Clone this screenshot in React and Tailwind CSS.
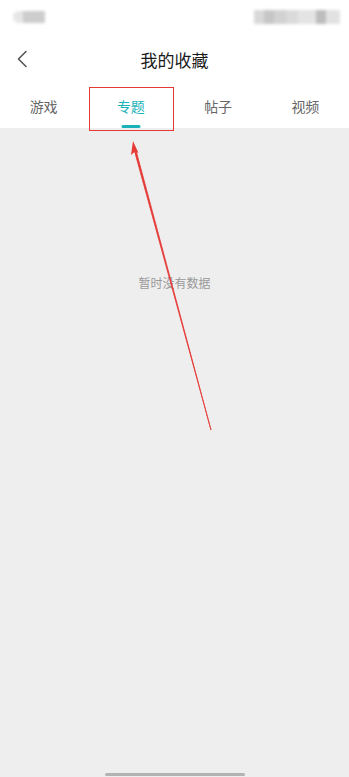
import { useState } from 'react'

const tabs = ['游戏', '专题', '帖子', '视频']

function App() {
  const [active, setActive] = useState(1)

  return (
    <div
      className="relative w-[349px] h-[777px] flex flex-col bg-white overflow-hidden"
      style={{ fontFamily: '"Noto Sans CJK SC", "Noto Sans", sans-serif' }}
    >
      {/* 状态栏（已打码） */}
      <div className="h-[36px] flex items-start justify-between pl-[13px] pr-[9px] pt-[10px]">
        <div className="flex mt-[1px] blur-[1.5px]">
          <div className="w-[10px] h-[12px] bg-[#e6e6e6] rounded-l-md" />
          <div className="w-[22px] h-[12px] bg-[#cdcdcd]" />
        </div>
        <div className="flex blur-[1.5px]">
          <div className="w-[10px] h-[14px] bg-[#d9d9d9]" />
          <div className="w-[10px] h-[14px] bg-[#c6c6c6]" />
          <div className="w-[12px] h-[14px] bg-[#d2d2d2]" />
          <div className="w-[12px] h-[14px] bg-[#dadada]" />
          <div className="w-[18px] h-[14px] bg-[#e4e4e4]" />
          <div className="w-[10px] h-[14px] bg-[#bdbdbd]" />
          <div className="w-[14px] h-[14px] bg-[#e2e2e2]" />
        </div>
      </div>

      {/* 标题栏 */}
      <div className="relative h-[48px] flex items-center justify-center">
        <button className="absolute left-[12px] top-[13px] w-[20px] h-[20px] flex items-center justify-center">
          <svg width="12" height="18" viewBox="0 0 12 18" fill="none">
            <path d="M10 1.5L2.5 9L10 16.5" stroke="#555" strokeWidth="1.6" strokeLinecap="round" strokeLinejoin="round" />
          </svg>
        </button>
        <h1 className="text-[17px] text-[#1a1a1a] leading-none -mt-[2px]">我的收藏</h1>
      </div>

      {/* 分类标签 */}
      <div className="h-[44px] grid grid-cols-4">
        {tabs.map((t, i) => (
          <button
            key={t}
            onClick={() => setActive(i)}
            className="relative flex items-center justify-center"
          >
            <span className={`text-[14px] leading-none ${active === i ? 'text-[#1bb3b8]' : 'text-[#666]'}`}>{t}</span>
            {active === i && (
              <span className="absolute bottom-0 left-1/2 -translate-x-1/2 w-[19px] h-[3px] rounded-full bg-[#1bb3b8]" />
            )}
          </button>
        ))}
      </div>

      {/* 内容区 */}
      <div className="flex-1 bg-[#eeeeee] flex flex-col items-center">
        <p className="mt-[149px] text-[12px] text-[#999] leading-none">暂时没有数据</p>
        <div className="mt-auto mb-[1px] w-[140px] h-[3px] rounded-full bg-[#b3b3b3]" />
      </div>

      {/* 标注：红框和箭头 */}
      <div className="absolute left-[89px] top-[87px] w-[85px] h-[44px] border border-[#e53935] pointer-events-none" />
      <svg className="absolute inset-0 pointer-events-none" width="349" height="777" viewBox="0 0 349 777">
        <path d="M211 430 L136.2 151 L134.6 151.4 Z" fill="#e53935" stroke="#e53935" strokeWidth="0.8" strokeLinejoin="round" />
        <path d="M133 141 L138.5 153 L135 151.5 L131 155 Z" fill="#e53935" />
      </svg>
    </div>
  )
}

export default App
